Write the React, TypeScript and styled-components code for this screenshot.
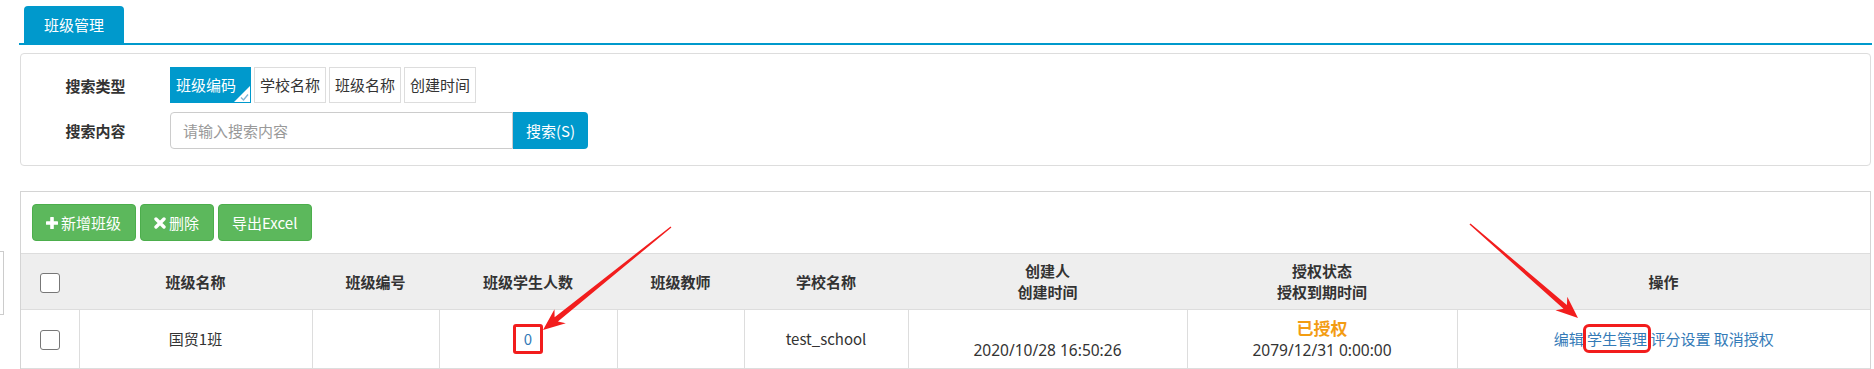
import React from 'react';
import styled, { createGlobalStyle } from 'styled-components';

const GlobalStyle = createGlobalStyle`
  html, body { margin: 0; padding: 0; background: #fff; }
  body {
    font-family: "Noto Sans CJK SC", "Noto Sans", sans-serif;
    font-size: 15px;
    color: #333;
  }
  * { box-sizing: border-box; }
`;

const BLUE = '#0099cc';

const Page = styled.div`
  position: relative;
  width: 1874px;
  height: 369px;
  overflow: hidden;
  padding: 6px 2px 0 19px;
`;

const TabBar = styled.div`
  display: flex;
  padding-left: 5px;
  border-bottom: 2px solid ${BLUE};
`;

const Tab = styled.div`
  width: 100px;
  height: 37px;
  display: flex;
  align-items: center;
  justify-content: center;
  background: ${BLUE};
  color: #fff;
  border-radius: 4px 4px 0 0;
  font-size: 15px;
`;

const Body = styled.div`
  margin: 8px 1px 0 1px;
  display: flex;
  flex-direction: column;
  gap: 25px;
`;

const SearchPanel = styled.div`
  border: 1px solid #ddd;
  border-radius: 4px;
  padding: 13px 0 16px;
  display: grid;
  grid-template-columns: 149px 1fr;
  row-gap: 9px;
  align-items: center;
`;

const FieldLabel = styled.div`
  text-align: center;
  font-weight: 700;
  font-size: 15px;
  color: #333;
`;

const ToggleGroup = styled.div`
  display: flex;
  gap: 3px;
`;

const Toggle = styled.div<{ $active?: boolean }>`
  position: relative;
  height: 36px;
  line-height: 34px;
  padding: 0 ${(p) => (p.$active ? '14px' : '5px')} 0 5px;
  border: 1px solid ${(p) => (p.$active ? BLUE : '#ddd')};
  background: ${(p) => (p.$active ? BLUE : '#fff')};
  color: ${(p) => (p.$active ? '#fff' : '#333')};
  font-size: 15px;
  white-space: nowrap;
`;

const CornerMark = styled.svg`
  position: absolute;
  right: 0;
  bottom: 0;
`;

const SearchRow = styled.div`
  display: flex;
`;

const SearchInput = styled.input`
  width: 343px;
  height: 37px;
  border: 1px solid #ccc;
  border-radius: 4px 0 0 4px;
  padding: 0 12px;
  font-family: inherit;
  font-size: 15px;
  color: #333;
  outline: none;
  &::placeholder { color: #999; }
`;

const SearchButton = styled.button`
  width: 75px;
  height: 37px;
  border: none;
  border-radius: 0 4px 4px 0;
  background: ${BLUE};
  color: #fff;
  font-family: inherit;
  font-size: 15px;
  padding: 0;
`;

const TablePanel = styled.div`
  border: 1px solid #d4d4d4;
  border-bottom: none;
`;

const Toolbar = styled.div`
  display: flex;
  gap: 4px;
  padding: 12px 11px;
  border-bottom: 1px solid #ddd;
`;

const GreenButton = styled.button`
  height: 37px;
  display: inline-flex;
  align-items: center;
  gap: 3px;
  padding: 0 14px 0 13px;
  background: #5cb85c;
  border: 1px solid #4cae4c;
  border-radius: 4px;
  color: #fff;
  font-family: inherit;
  font-size: 15px;
`;

const Table = styled.table`
  width: 100%;
  border-collapse: collapse;
  table-layout: fixed;
`;

const Th = styled.th`
  height: 55px;
  background: #eee;
  font-weight: 700;
  font-size: 15px;
  line-height: 21px;
  color: #333;
  text-align: center;
  vertical-align: middle;
  border-bottom: 1px solid #ddd;
  padding: 0;
`;

const Td = styled.td<{ $first?: boolean }>`
  height: 59px;
  text-align: center;
  vertical-align: middle;
  font-size: 15px;
  line-height: 22px;
  color: #333;
  border-left: ${(p) => (p.$first ? 'none' : '1px solid #ddd')};
  border-bottom: 1px solid #ddd;
  padding: 0;
`;

const CheckBox = styled.span`
  display: inline-block;
  width: 20px;
  height: 20px;
  border: 1px solid #777;
  border-radius: 3px;
  background: #fff;
  vertical-align: middle;
`;

const CountLink = styled.span`
  display: inline-block;
  color: #337ab7;
  border: 3px solid #f21d1d;
  border-radius: 3px;
  padding: 0 8px;
  line-height: 24px;
`;

const Line = styled.div`
  min-height: 22px;
`;

const DateLine = styled.div`
  min-height: 22px;
  font-family: "Noto Sans", "Noto Sans CJK SC", sans-serif;
  font-size: 15.5px;
`;

const AuthState = styled.div`
  color: #f39c12;
  font-weight: 700;
  font-size: 17px;
  line-height: 22px;
`;

const OpLink = styled.span<{ $marked?: boolean }>`
  color: #337ab7;
  ${(p) => (p.$marked ? 'outline: 3px solid #f21d1d; outline-offset: 1px; border-radius: 2px;' : '')}
`;

const SideTab = styled.div`
  position: absolute;
  left: -40px;
  top: 251px;
  width: 44px;
  height: 64px;
  border: 1px solid #ccc;
  background: #fff;
  display: flex;
  align-items: center;
  justify-content: flex-end;
  padding-right: 4px;
`;

const SideDot = styled.span`
  width: 3px;
  height: 3px;
  background: #2a4a7a;
  border-radius: 1px;
`;

const Annotation = styled.svg`
  position: absolute;
  left: 0;
  top: 0;
  pointer-events: none;
`;

function arrowPoints(x1: number, y1: number, x2: number, y2: number) {
  const headLen = 22;
  const headHalf = 9;
  const tailHalf = 0.7;
  const neckHalf = 2.6;
  const dx = x2 - x1;
  const dy = y2 - y1;
  const len = Math.hypot(dx, dy);
  const ux = dx / len;
  const uy = dy / len;
  const px = -uy;
  const py = ux;
  const bx = x2 - ux * headLen;
  const by = y2 - uy * headLen;
  const nx = x2 - ux * (headLen - 5);
  const ny = y2 - uy * (headLen - 5);
  const pts = [
    [x1 + px * tailHalf, y1 + py * tailHalf],
    [nx + px * neckHalf, ny + py * neckHalf],
    [bx + px * headHalf, by + py * headHalf],
    [x2, y2],
    [bx - px * headHalf, by - py * headHalf],
    [nx - px * neckHalf, ny - py * neckHalf],
    [x1 - px * tailHalf, y1 - py * tailHalf],
  ];
  return pts.map((p) => p.map((v) => v.toFixed(1)).join(',')).join(' ');
}

const PlusIcon = () => (
  <svg width="12" height="12" viewBox="0 0 12 12">
    <rect x="4.2" y="0" width="3.6" height="12" rx="0.6" fill="#fff" />
    <rect x="0" y="4.2" width="12" height="3.6" rx="0.6" fill="#fff" />
  </svg>
);

const CrossIcon = () => (
  <svg width="12" height="12" viewBox="0 0 12 12">
    <path d="M2 2 L10 10 M10 2 L2 10" stroke="#fff" strokeWidth="3.4" strokeLinecap="round" />
  </svg>
);

const columns = [58, 233, 127, 178, 127, 164, 279, 270, 413];

export default function App() {
  return (
    <>
      <GlobalStyle />
      <Page>
        <TabBar>
          <Tab>班级管理</Tab>
        </TabBar>
        <Body>
          <SearchPanel>
            <FieldLabel>搜索类型</FieldLabel>
            <ToggleGroup>
              <Toggle $active>
                班级编码
                <CornerMark width="16" height="16" viewBox="0 0 16 16">
                  <polygon points="0,16 16,0 16,16" fill="#fff" />
                  <path d="M7 11.5 L9.5 14 L14 8.5" stroke="#7fb6d6" strokeWidth="1.4" fill="none" />
                </CornerMark>
              </Toggle>
              <Toggle>学校名称</Toggle>
              <Toggle>班级名称</Toggle>
              <Toggle>创建时间</Toggle>
            </ToggleGroup>
            <FieldLabel>搜索内容</FieldLabel>
            <SearchRow>
              <SearchInput placeholder="请输入搜索内容" />
              <SearchButton>搜索(S)</SearchButton>
            </SearchRow>
          </SearchPanel>

          <TablePanel>
            <Toolbar>
              <GreenButton>
                <PlusIcon />
                新增班级
              </GreenButton>
              <GreenButton>
                <CrossIcon />
                删除
              </GreenButton>
              <GreenButton>导出Excel</GreenButton>
            </Toolbar>
            <Table>
              <colgroup>
                {columns.map((w, i) => (
                  <col key={i} style={{ width: w }} />
                ))}
              </colgroup>
              <thead>
                <tr>
                  <Th>
                    <CheckBox />
                  </Th>
                  <Th>班级名称</Th>
                  <Th>班级编号</Th>
                  <Th>班级学生人数</Th>
                  <Th>班级教师</Th>
                  <Th>学校名称</Th>
                  <Th>
                    创建人
                    <br />
                    创建时间
                  </Th>
                  <Th>
                    授权状态
                    <br />
                    授权到期时间
                  </Th>
                  <Th>操作</Th>
                </tr>
              </thead>
              <tbody>
                <tr>
                  <Td $first>
                    <CheckBox />
                  </Td>
                  <Td>国贸1班</Td>
                  <Td></Td>
                  <Td>
                    <CountLink>0</CountLink>
                  </Td>
                  <Td></Td>
                  <Td>test_school</Td>
                  <Td>
                    <Line></Line>
                    <DateLine>2020/10/28 16:50:26</DateLine>
                  </Td>
                  <Td>
                    <AuthState>已授权</AuthState>
                    <DateLine>2079/12/31 0:00:00</DateLine>
                  </Td>
                  <Td>
                    <OpLink>编辑</OpLink> <OpLink $marked>学生管理</OpLink> <OpLink>评分设置</OpLink>{' '}
                    <OpLink>取消授权</OpLink>
                  </Td>
                </tr>
              </tbody>
            </Table>
          </TablePanel>
        </Body>

        <SideTab>
          <SideDot />
        </SideTab>

        <Annotation width="1874" height="369" viewBox="0 0 1874 369">
          <polygon points={arrowPoints(671, 227, 543, 330)} fill="#f21d1d" />
          <polygon points={arrowPoints(1470, 224, 1578, 318)} fill="#f21d1d" />
        </Annotation>
      </Page>
    </>
  );
}
